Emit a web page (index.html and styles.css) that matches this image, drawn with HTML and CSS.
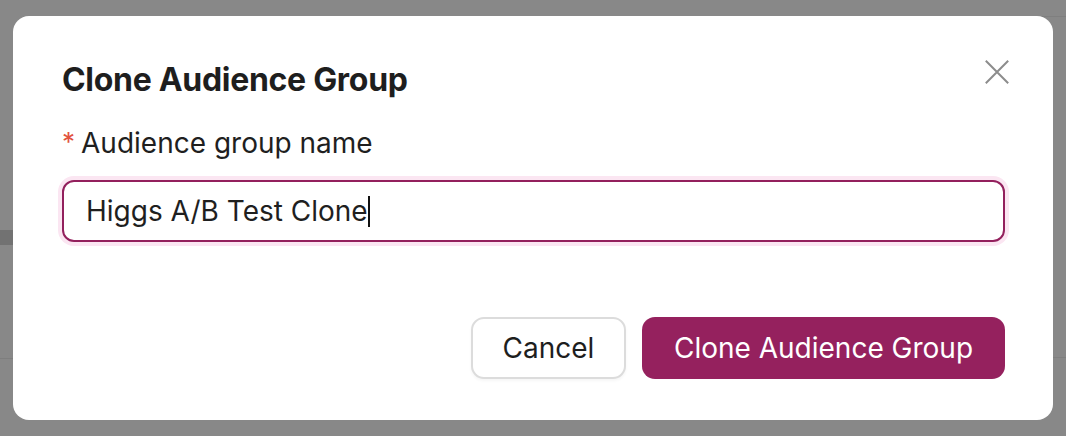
FILE: index.html
```html
<!DOCTYPE html>
<html lang="en">
<head>
<meta charset="utf-8">
<title>Clone Audience Group</title>
<link rel="stylesheet" href="styles.css">
</head>
<body>
<div class="page">
  <div class="page-stripe"></div>
  <div class="page-line"></div>
  <div class="page-card"></div>
</div>
<div class="overlay">
  <div class="modal" role="dialog" aria-labelledby="dlg-title">
    <div class="modal-header">
      <h2 id="dlg-title" class="modal-title">Clone Audience Group</h2>
      <button class="close-btn" aria-label="Close">
        <svg width="24" height="24" viewBox="0 0 24 24" fill="none" stroke="#8c8c8c" stroke-width="2" stroke-linecap="butt">
          <path d="M0.8 0.8L23.2 23.2M23.2 0.8L0.8 23.2"/>
        </svg>
      </button>
    </div>
    <label class="field-label" for="name"><span class="req">*</span>Audience group name</label>
    <div class="input-ring">
      <div class="input-box"><span class="input-text">Higgs A/B Test Clone</span><span class="caret"></span></div>
    </div>
    <div class="modal-footer">
      <button class="btn btn-secondary">Cancel</button>
      <button class="btn btn-primary">Clone Audience Group</button>
    </div>
  </div>
</div>
</body>
</html>
```

FILE: styles.css
```css
* { box-sizing: border-box; }
html, body { margin: 0; padding: 0; }
body {
  width: 1066px;
  height: 436px;
  overflow: hidden;
  background: #888888;
  font-family: Inter, "Noto Sans", sans-serif;
  position: relative;
}
.page { position: absolute; inset: 0; }
.page-stripe {
  position: absolute; left: 0; top: 230px; width: 13px; height: 15px;
  background: #727272;
}
.page-line {
  position: absolute; left: 0; top: 358px; width: 13px; height: 1px;
  background: #7e7e7e;
}
.page-card {
  position: absolute; left: 1020px; top: 16px; width: 80px; height: 342px;
  border: 1px solid #7f7f7f; border-radius: 16px;
}
.overlay {
  position: absolute; inset: 0;
  padding: 16px 13px 0 13px;
}
.modal {
  width: 1040px;
  height: 404px;
  background: #ffffff;
  border-radius: 16px;
  padding: 44px 48px 41px 49px;
  display: flex;
  flex-direction: column;
}
.modal-header {
  display: flex;
  justify-content: space-between;
  align-items: flex-start;
}
.modal-title {
  margin: 0;
  font-size: 32px;
  font-weight: 700;
  line-height: 40px;
  color: #1e1e1e;
  letter-spacing: -0.3px;
}
.close-btn {
  margin: 0 -4px 0 0;
  padding: 0;
  border: 0;
  background: none;
  width: 24px; height: 24px;
  display: flex;
}
.field-label {
  margin-top: 25px;
  font-size: 28px;
  line-height: 34px;
  color: #1f1f1f;
}
.req {
  color: #e2533e;
  font-size: 26px;
  vertical-align: 2px;
  margin-right: 6px;
}
.input-ring {
  margin: 16px -4px 0 -4px;
  padding: 4px;
  border-radius: 16px;
  background: #fbe6f2;
}
.input-box {
  height: 62px;
  background: #fff;
  border: 2px solid #93205d;
  border-radius: 12px;
  padding: 0 22px;
  display: flex;
  align-items: center;
}
.input-text {
  font-size: 28px;
  color: #1f1f1f;
}
.caret {
  width: 2px; height: 31px; background: #111;
}
.modal-footer {
  margin-top: auto;
  display: flex;
  justify-content: flex-end;
  gap: 16px;
}
.btn {
  height: 62px;
  border-radius: 13px;
  font-family: Inter, "Noto Sans", sans-serif;
  font-size: 28px;
  padding: 0;
}
.btn-secondary {
  width: 155px;
  background: #fff;
  border: 2px solid #dcdcdc;
  color: #1e1e1e;
  box-shadow: 0 2px 3px rgba(0,0,0,0.04);
}
.btn-primary {
  width: 363px;
  background: #95215e;
  border: 0;
  color: #fff;
}
```
